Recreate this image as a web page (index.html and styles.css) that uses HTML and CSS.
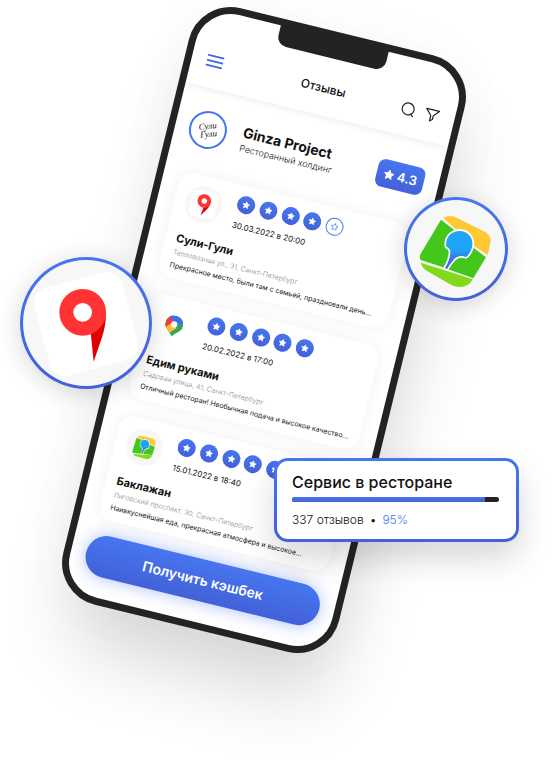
FILE: index.html
```html
<!DOCTYPE html>
<html lang="ru">
<head>
<meta charset="utf-8">
<meta name="viewport" content="width=device-width, initial-scale=1">
<title>Отзывы</title>
<link rel="stylesheet" href="styles.css">
</head>
<body>
<svg class="defs" width="0" height="0" aria-hidden="true">
  <defs>
    <linearGradient id="pin" x1="0" y1="0" x2="0" y2="1">
      <stop offset="0.5" stop-color="#1fa5f8"/>
      <stop offset="0.8" stop-color="#4168e0"/>
    </linearGradient>
    <clipPath id="drop"><path d="M9 0a9 9 0 0 1 9 9c0 5-5 7-9 12-4-5-9-7-9-12a9 9 0 0 1 9-9z"/></clipPath>
    <symbol id="star" viewBox="0 0 20 20">
      <path d="M10 1.500l2.600 5.400 5.900.8-4.300 4.100 1.100 5.900-5.300-2.900-5.300 2.900 1.100-5.900L1.500 7.700l5.900-.8z" stroke-linejoin="round" stroke-width="1.600"/>
    </symbol>
    <g id="gis">
      <path fill="#ffc933" d="M160 112Q174 104 194 109L286 155Q306 168 301 188L293 224L252 197L200 150Z"/>
      <path fill="#43c71a" d="M153 118L215 166L166 263L92 239Q87 230 92 220Z"/>
      <path fill="#43c71a" d="M240 194L288 231L250 294L172 266L200 210Z"/>
      <path fill="#82d91a" d="M92 247L165 270L248 297Q236 322 205 320Q190 318 180 312L105 268Q94 258 92 247Z"/>
      <path fill="url(#pin)" stroke="#fff" stroke-width="10" paint-order="stroke" d="M169 199C165 171 184 152 209 152C234 152 250 172 247 195Q244 218 228 230Q206 222 191 238Q181 249 171 266L165 264Q181 236 181 214Q180 203 169 199Z"/>
    </g>
    <g id="yandex">
      <rect x="122" y="115" width="272" height="272" rx="46" fill="#fff" transform="rotate(-15 258 251)"/>
      <path fill="#e10000" d="M272 276L318 218Q318 256 305 294L281 364Z"/>
      <circle cx="248" cy="216" r="49" fill="none" stroke="#f33" stroke-width="42"/>
    </g>
  </defs>
</svg>

<main class="stage">
  <section class="phone" aria-label="Отзывы">
    <div class="notch"></div>
    <header class="bar">
      <button class="icon-btn" type="button" aria-label="Меню">
        <svg width="17" height="16" viewBox="0 0 17 16"><path d="M1 3h15.500M1 8h15.500M1 13h15.500" fill="none" stroke="#4169e1" stroke-width="1.800" stroke-linecap="round"/></svg>
      </button>
      <h1 class="title">Отзывы</h1>
      <div class="tools">
        <button class="icon-btn" type="button" aria-label="Поиск">
          <svg width="16" height="16" viewBox="0 0 16 16" fill="none" stroke="#222" stroke-width="1.200" stroke-linecap="round"><circle cx="7.500" cy="8" r="6"/><path d="M11 12.500l2.500 2"/></svg>
        </button>
        <button class="icon-btn" type="button" aria-label="Фильтр">
          <svg width="16" height="16" viewBox="0 0 16 16" fill="none" stroke="#222" stroke-width="1.200" stroke-linejoin="round"><path d="M1.500 3h13L9.500 9v3.500l-2.500 2V9z"/></svg>
        </button>
      </div>
    </header>

    <div class="profile">
      <div class="logo"><span>Сули<br>Гули</span></div>
      <div class="about">
        <h2 class="brand">Ginza Project</h2>
        <p class="kind">Ресторанный холдинг</p>
      </div>
      <div class="score"><svg class="score-star" viewBox="0 0 20 20"><use href="#star"/></svg>4.3</div>
    </div>

    <ul class="reviews">
      <li class="card">
        <div class="top">
          <svg class="source" viewBox="69 62 378 378"><circle cx="258" cy="251" r="189" fill="#f7f7f7"/><use href="#yandex" transform="rotate(14 258 251)"/></svg>
          <div class="rating">
            <div class="stars">
              <i class="dot"><svg><use href="#star"/></svg></i><i class="dot"><svg><use href="#star"/></svg></i><i class="dot"><svg><use href="#star"/></svg></i><i class="dot"><svg><use href="#star"/></svg></i><i class="dot empty"><svg><use href="#star"/></svg></i>
            </div>
            <time class="date">30.03.2022 в 20:00</time>
          </div>
        </div>
        <h3 class="name">Сули-Гули</h3>
        <p class="address">Тепловозная ул., 31, Санкт-Петербург</p>
        <p class="text">Прекрасное место, были там с семьей, праздновали день...</p>
      </li>
      <li class="card">
        <div class="top">
          <svg class="source" viewBox="-9.500 -8 37 37">
            <g clip-path="url(#drop)">
              <path fill="#34a853" d="M0 0h18v21H0z"/>
              <path fill="#fbc22d" d="M-1 11.500L5 5l7 7-8.500 9H-1z"/>
              <path fill="#f23c3c" d="M-1-1h4l5 7-9 10z"/>
              <path fill="#3d73e8" d="M2.500 2L4-1h15v5l-8 7-3-5z"/>
            </g>
            <circle cx="9" cy="9" r="3.200" fill="#fff"/>
          </svg>
          <div class="rating">
            <div class="stars">
              <i class="dot"><svg><use href="#star"/></svg></i><i class="dot"><svg><use href="#star"/></svg></i><i class="dot"><svg><use href="#star"/></svg></i><i class="dot"><svg><use href="#star"/></svg></i><i class="dot"><svg><use href="#star"/></svg></i>
            </div>
            <time class="date">20.02.2022 в 17:00</time>
          </div>
        </div>
        <h3 class="name">Едим руками</h3>
        <p class="address">Садовая улица, 41, Санкт-Петербург</p>
        <p class="text">Отличный ресторан! Необычная подача и высокое качество...</p>
      </li>
      <li class="card">
        <div class="top">
          <svg class="source" viewBox="37 54 320 320"><circle cx="197" cy="214" r="160" fill="#f7f7f7"/><use href="#gis" transform="rotate(-27 197 214)"/></svg>
          <div class="rating">
            <div class="stars">
              <i class="dot"><svg><use href="#star"/></svg></i><i class="dot"><svg><use href="#star"/></svg></i><i class="dot"><svg><use href="#star"/></svg></i><i class="dot"><svg><use href="#star"/></svg></i><i class="dot"><svg><use href="#star"/></svg></i>
            </div>
            <time class="date">15.01.2022 в 18:40</time>
          </div>
        </div>
        <h3 class="name">Баклажан</h3>
        <p class="address">Лиговский проспект, 30, Санкт-Петербург</p>
        <p class="text">Наивкуснейшая еда, прекрасная атмосфера и высокое...</p>
      </li>
    </ul>

    <button class="cashback" type="button">Получить кэшбек</button>
  </section>

  <div class="bubble bubble-yandex"><svg viewBox="69 59 378 378"><use href="#yandex"/></svg></div>
  <div class="bubble bubble-gis"><svg viewBox="51 59 294 294"><use href="#gis"/></svg></div>

  <aside class="service">
    <h2 class="service-title">Сервис в ресторане</h2>
    <div class="track"><div class="fill" style="width:93%"></div></div>
    <p class="summary"><span>337 отзывов</span><span>•</span><span class="percent">95%</span></p>
  </aside>
</main>
</body>
</html>
```
FILE: styles.css
```css
:root {
  --blue-top: #4676ef;
  --blue-bottom: #4361d8;
  --blue: linear-gradient(var(--blue-top), var(--blue-bottom));
  --ink: #232323;
}

* {
  box-sizing: border-box;
}

body,
h1,
h2,
h3,
p,
ul {
  margin: 0;
  padding: 0;
}

body {
  background: #fff;
  color: #111;
  font-family: Inter, "Open Sans", sans-serif;
  overflow-x: hidden;
}

button {
  border: 0;
  padding: 0;
  background: none;
  font: inherit;
  cursor: pointer;
}

svg {
  display: block;
}

.defs {
  position: absolute;
}

.stage {
  position: relative;
  max-width: 559px;
  margin: 0 auto;
  padding: 23px 0 134px 122px;
}

/* Phone */

.phone {
  position: relative;
  width: 284px;
  border: 7px solid var(--ink);
  border-radius: 43px;
  background: #fff;
  transform: rotate(13.75deg);
  box-shadow: 12px 52px 72px -8px rgba(0, 0, 0, 0.15), 0 0 60px rgba(0, 0, 0, 0.03);
}

.notch {
  position: absolute;
  top: -1px;
  left: 50%;
  width: 111px;
  height: 21px;
  margin-left: -56px;
  border-radius: 0 0 10px 10px;
  background: var(--ink);
}

.bar {
  display: grid;
  grid-template-columns: 1fr auto 1fr;
  align-items: center;
  padding: 39px 15px 15px;
  border-radius: 36px 36px 0 0;
  box-shadow: 0 4px 6px -2px rgba(0, 0, 0, 0.07);
}

.icon-btn {
  justify-self: start;
}

.title {
  font-size: 12px;
  line-height: 24px;
  font-weight: 500;
}

.tools {
  display: flex;
  justify-content: flex-end;
  gap: 8px;
}

.profile {
  display: flex;
  align-items: center;
  padding: 22px 15px 26px 14px;
}

.logo {
  display: grid;
  place-items: center;
  width: 38px;
  height: 38px;
  border: 2px solid var(--blue-top);
  border-radius: 50%;
  font: italic 9px/8px "Liberation Serif", serif;
  text-align: center;
}

.logo span {
  transform: rotate(-20deg);
}

.about {
  flex: 1;
  margin-left: 16px;
}

.brand {
  font-size: 14px;
  line-height: 18px;
  font-weight: 700;
}

.kind {
  font-size: 9px;
  line-height: 13px;
  font-weight: 300;
}

.score {
  display: flex;
  align-items: center;
  justify-content: center;
  gap: 3px;
  width: 48px;
  height: 28px;
  border-radius: 7px;
  background: var(--blue);
  color: #fff;
  font-size: 13px;
  font-weight: 600;
}

.score-star {
  width: 11px;
  height: 11px;
  fill: #fff;
  stroke: #fff;
}

/* Reviews */

.reviews {
  display: grid;
  gap: 17px;
  padding: 0 17px;
  list-style: none;
}

.card {
  padding: 10px 11px 7px;
  border-radius: 16px;
  background: #fff;
  box-shadow: 0 0 16px rgba(0, 0, 0, 0.06);
  white-space: nowrap;
}

.top {
  display: flex;
  gap: 14px;
  margin-bottom: 11px;
}

.source {
  width: 37px;
  height: 37px;
}

.stars {
  display: flex;
  justify-content: space-between;
  width: 109px;
  margin-bottom: 6px;
}

.dot {
  display: grid;
  place-items: center;
  width: 18px;
  height: 18px;
  border-radius: 50%;
  background: var(--blue);
}

.dot svg {
  width: 8px;
  height: 8px;
  fill: #fff;
  stroke: #fff;
}

.empty {
  border: 1px solid var(--blue-top);
  background: #fff;
}

.empty svg {
  fill: none;
  stroke: var(--blue-top);
}

.date {
  display: block;
  font-size: 8px;
  line-height: 14px;
}

.name {
  font-size: 11px;
  line-height: 16px;
  font-weight: 700;
}

.address,
.text {
  font-size: 7px;
  line-height: 13px;
}

.address {
  color: #888;
  font-weight: 300;
}

.cashback {
  display: block;
  width: calc(100% - 30px);
  margin: 15px 15px 21px;
  border-radius: 21px;
  background: var(--blue);
  box-shadow: 0 0 16px rgba(67, 112, 240, 0.45);
  color: #fff;
  font-size: 14px;
  line-height: 42px;
  font-weight: 600;
}

/* Floating items over the phone */

.bubble,
.service {
  position: absolute;
  border: 3px solid transparent;
  box-shadow: 0 4px 24px rgba(0, 0, 0, 0.16);
}

.bubble {
  border-radius: 50%;
  background: linear-gradient(#f7f7f7, #f7f7f7) padding-box, var(--blue) border-box;
}

.bubble-yandex {
  top: 257px;
  left: 20px;
  width: 132px;
}

.bubble-gis {
  top: 197px;
  left: 404px;
  width: 104px;
}

.service {
  top: 458px;
  left: 274px;
  width: 245px;
  padding: 12px 17px 11px 15px;
  border-radius: 14px;
  background: linear-gradient(#fff, #fff) padding-box, var(--blue) border-box;
  box-shadow: 0 16px 32px rgba(0, 0, 0, 0.16);
}

.service-title {
  font-size: 16px;
  line-height: 18px;
  font-weight: 500;
}

.track {
  height: 5px;
  margin: 6px 0 10px;
  border-radius: 3px;
  background: var(--ink);
  overflow: hidden;
}

.fill {
  height: 100%;
  background: var(--blue);
}

.summary {
  display: flex;
  gap: 6px;
  font-size: 12px;
  line-height: 16px;
  font-weight: 300;
}

.percent {
  color: var(--blue-top);
}
```
